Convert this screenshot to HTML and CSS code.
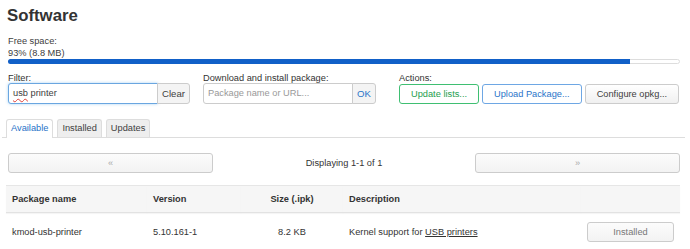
FILE: index.html
```html
<!DOCTYPE html>
<html lang="en">
<head>
    <meta charset="UTF-8">
    <title>Software</title>
    <link rel="stylesheet" href="styles.css">
</head>
<body>
    <div class="main">
        <h2 class="title">Software</h2>

        <div class="free-space">
            <div>Free space:</div>
            <div>93% (8.8 MB)</div>
            <div class="progress"><div class="progress-fill" style="width: 92.8%"></div></div>
        </div>

        <div class="controls">
            <div class="control control-filter">
                <label>Filter:</label>
                <div class="input-group">
                    <div class="text-input focused"><span class="misspelled">usb</span> printer</div>
                    <button class="btn btn-addon">Clear</button>
                </div>
            </div>
            <div class="control control-install">
                <label>Download and install package:</label>
                <div class="input-group">
                    <div class="text-input placeholder">Package name or URL...</div>
                    <button class="btn btn-addon btn-ok">OK</button>
                </div>
            </div>
            <div class="control control-actions">
                <label>Actions:</label>
                <div class="actions">
                    <button class="btn btn-positive">Update lists...</button>
                    <button class="btn btn-action">Upload Package...</button>
                    <button class="btn">Configure opkg...</button>
                </div>
            </div>
        </div>

        <ul class="tabs">
            <li class="tab active">Available</li>
            <li class="tab">Installed</li>
            <li class="tab">Updates</li>
        </ul>

        <div class="pager">
            <button class="btn pager-btn">&laquo;</button>
            <div class="pager-text">Displaying 1-1 of 1</div>
            <button class="btn pager-btn">&raquo;</button>
        </div>

        <table class="packages">
            <thead>
                <tr>
                    <th class="col-name">Package name</th>
                    <th class="col-version">Version</th>
                    <th class="col-size">Size (.ipk)</th>
                    <th class="col-desc">Description</th>
                    <th class="col-btn"></th>
                </tr>
            </thead>
            <tbody>
                <tr>
                    <td>kmod-usb-printer</td>
                    <td>5.10.161-1</td>
                    <td class="col-size">8.2 KB</td>
                    <td>Kernel support for <a href="#">USB printers</a></td>
                    <td class="col-btn"><button class="btn btn-installed">Installed</button></td>
                </tr>
            </tbody>
        </table>
    </div>
</body>
</html>
```

FILE: styles.css
```css
body {
    margin: 0;
    font-family: "Liberation Sans", Arial, sans-serif;
    font-size: 9.25px;
    line-height: 12px;
    color: #404040;
    background-color: #fff;
}

.main {
    margin: 0 10px 0 8px;
}

.title {
    margin: 6px 0 0 -1px;
    font-size: 16.8px;
    line-height: 20px;
    font-weight: bold;
    color: #333;
}

.free-space {
    margin-top: 9px;
}

.progress {
    height: 5px;
    box-sizing: border-box;
    border: 1px solid #ddd;
    border-radius: 3px;
    background-color: #fff;
}

.progress-fill {
    height: 5px;
    margin: -1px 0 0 -1px;
    border-radius: 3px 0 0 3px;
    background-color: #1160c8;
}

/* filter / install / actions row */
.controls {
    display: flex;
    margin-top: 9px;
}

.control label {
    display: block;
    line-height: 10px;
    color: #333;
    white-space: nowrap;
}

.control-filter {
    width: 195px;
    flex-shrink: 0;
}

.control-install {
    width: 196px;
    flex-shrink: 0;
}

.control-actions {
    flex: 1;
}

.input-group {
    display: flex;
}

.text-input {
    box-sizing: border-box;
    width: 150px;
    height: 21px;
    padding: 0 4px;
    line-height: 19px;
    border: 1px solid #ccc;
    border-radius: 3px 0 0 3px;
    color: #404040;
    background-color: #fff;
}

.text-input.focused {
    border-color: #6aa6e0;
    box-shadow: 0 0 3px rgba(82, 168, 236, 0.5);
}

.text-input.placeholder {
    color: #999;
}

.misspelled {
    text-decoration: underline wavy #e0403a;
    text-decoration-thickness: 1px;
    text-underline-offset: 2px;
}

.btn {
    box-sizing: border-box;
    height: 20px;
    padding: 0 10px;
    font-family: inherit;
    font-size: 9.25px;
    white-space: nowrap;
    flex-shrink: 0;
    color: #404040;
    border: 1px solid #ccc;
    border-radius: 3px;
    background: linear-gradient(#fff, #f0f0f0);
    cursor: pointer;
}

.btn-addon {
    height: 21px;
    padding: 0 4px;
    margin-left: -1px;
    border-radius: 0 3px 3px 0;
    background: #f4f4f4;
    font-size: 9.6px;
}

.btn-ok {
    color: #2a74c9;
}

.actions {
    display: flex;
    gap: 3px;
    margin-top: 1px;
}

.actions .btn {
    padding: 0 11px;
}

.btn-positive {
    color: #1e9e4e;
    border-color: #3fbf72;
    background: #fff;
}

.btn-action {
    color: #2a74c9;
    border-color: #6ea7e4;
    background: #fff;
}

/* tabs */
.tabs {
    display: flex;
    gap: 4px;
    margin: 15px -5px 0 -6px;
    padding: 0 0 0 4px;
    list-style: none;
    border-bottom: 1px solid #ddd;
}

.tab {
    height: 17px;
    line-height: 17px;
    padding: 0 4px;
    margin-bottom: -1px;
    border: 1px solid #ddd;
    border-bottom: none;
    border-radius: 3px 3px 0 0;
    background-color: #eee;
    color: #404040;
}

.tab.active {
    background-color: #fff;
    color: #1f72c8;
    height: 18px;
}

/* pager */
.pager {
    display: flex;
    align-items: center;
    margin-top: 15px;
}

.pager-btn {
    width: 205px;
    color: #aaa;
    font-size: 9.25px;
    background: linear-gradient(#fcfcfc, #f3f3f3);
}

.pager-text {
    flex: 1;
    text-align: center;
    color: #333;
}

/* packages table */
.packages {
    width: calc(100% + 2px);
    margin: 12px 0 0 -2px;
    border-collapse: collapse;
    border-top: 1px solid #e6e6e6;
}

.packages th {
    height: 26px;
    padding: 0 6px;
    text-align: left;
    font-weight: bold;
    color: #333;
    background-color: #f6f6f6;
    border-bottom: 1px solid #e2e2e2;
    box-shadow: 0 1px 1px rgba(0, 0, 0, 0.04);
}

.packages td {
    height: 37px;
    padding: 0 6px;
    vertical-align: middle;
    color: #333;
}

.packages .col-name {
    width: 129px;
}

.packages .col-version {
    width: 82px;
}

.packages .col-size {
    width: 90px;
    text-align: center;
}

.packages .col-btn {
    width: 87px;
    text-align: center;
}

.packages a {
    color: #333;
}

.btn-installed {
    width: 87px;
    color: #777;
    background: linear-gradient(#fcfcfc, #f3f3f3);
}
```
